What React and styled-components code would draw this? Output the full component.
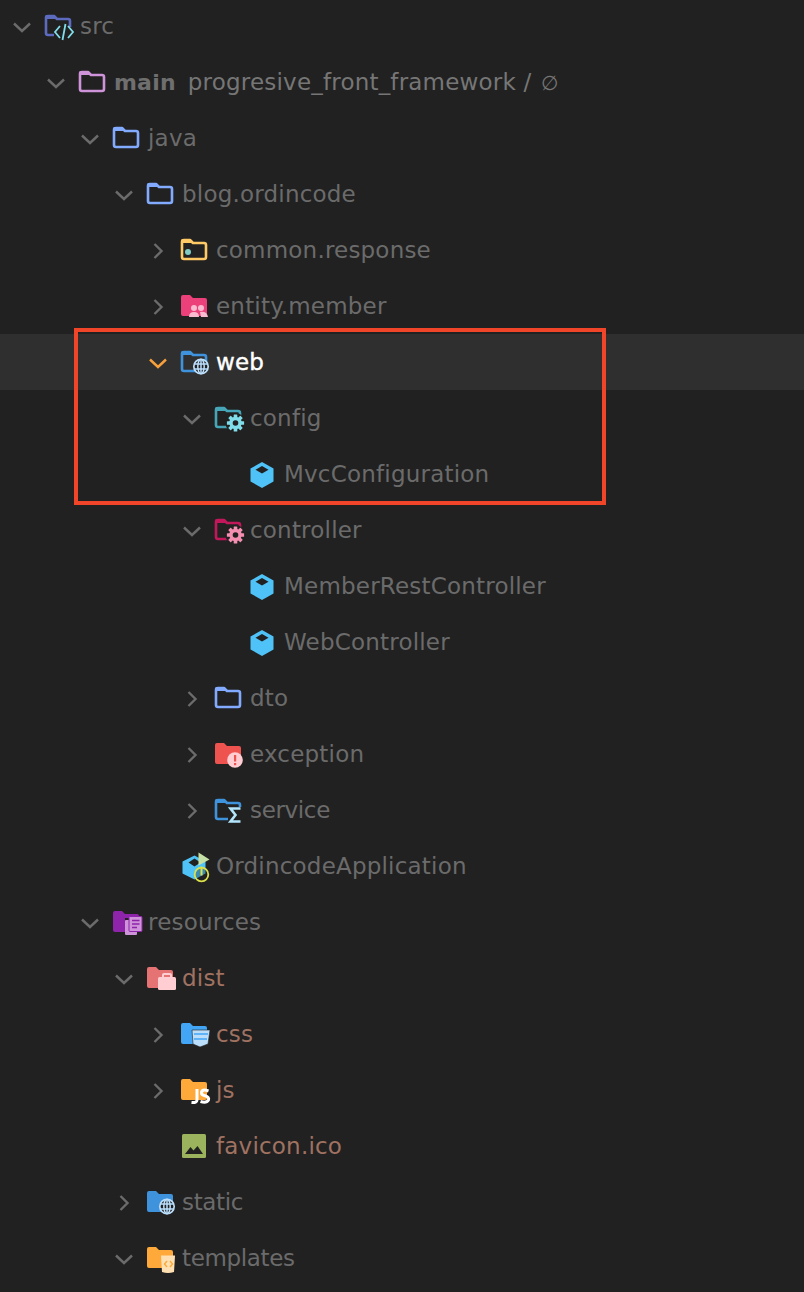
import React from 'react';
import styled, { createGlobalStyle } from 'styled-components';

const GlobalStyle = createGlobalStyle`
  html, body { margin: 0; padding: 0; background: #212121; }
`;

// ─── Icons ───
const FolderOutline = ({ color }) => (
  <path
    fill="none"
    stroke={color}
    strokeWidth="2.6"
    strokeLinejoin="round"
    d="M2 4 Q2 2 4 2 H10 L13 5 H24 Q26 5 26 7 V19 Q26 21 24 21 H4 Q2 21 2 19 Z"
  />
);

const FolderTab = ({ color }) => <path fill={color} d="M1 5 V3 Q1 1 3 1 H10 L14 5 Z" />;

const FolderSolid = ({ color }) => (
  <path fill={color} d="M1 3 Q1 1 3 1 H10 L13 4 H25 Q27 4 27 6 V20 Q27 22 25 22 H3 Q1 22 1 20 Z" />
);

const Gear = ({ color }) => (
  <g transform="translate(21.5 17)">
    {[0, 45, 90, 135].map((a) => (
      <rect key={a} x="-1.8" y="-8.6" width="3.6" height="17.2" rx="0.6" fill={color} transform={`rotate(${a})`} />
    ))}
    <circle r="6.2" fill={color} />
    <circle r="2.8" fill="#212121" />
  </g>
);

const Globe = ({ color }) => (
  <g transform="translate(21 16.5)" fill="none" stroke={color} strokeWidth="1.5">
    <circle r="7.2" fill="#212121" strokeWidth="1.7" />
    <ellipse rx="3.2" ry="7.2" />
    <path d="M-7 -2.4 H7 M-7 2.4 H7 M0 -7 V7" />
  </g>
);

const Cube = () => (
  <>
    <path fill="#4fc3f7" d="M12.5 1 L24 7.5 V20.5 L12.5 27 L1 20.5 V7.5 Z" />
    <path fill="#212121" d="M12.5 5 L19 8.8 L12.5 12.6 L6 8.8 Z" />
  </>
);

const ICONS = {
  src: (
    <>
      <FolderOutline color="#5c6bc0" />
      <FolderTab color="#5c6bc0" />
      <rect x="10" y="13" width="20" height="13" fill="#212121" />
      <path fill="none" stroke="#80deea" strokeWidth="1.8" d="M16 12 L11 18 L16 24 M24 12 L29 18 L24 24 M21.5 10 L18.5 26" />
    </>
  ),
  main: (
    <>
      <FolderOutline color="#ce93d8" />
      <FolderTab color="#ce93d8" />
    </>
  ),
  java: (
    <>
      <FolderOutline color="#82aaff" />
      <FolderTab color="#82aaff" />
    </>
  ),
  common: (
    <>
      <FolderOutline color="#ffc966" />
      <FolderTab color="#ffc966" />
      <circle cx="8" cy="14" r="3" fill="#80cbc4" />
    </>
  ),
  entity: (
    <>
      <FolderSolid color="#ec407a" />
      <circle cx="14" cy="14" r="3" fill="#f8bbd0" />
      <circle cx="21" cy="14" r="3" fill="#f8bbd0" />
      <path fill="#f8bbd0" d="M9 23 Q9 18 14 18 Q19 18 19 23 Z M20 18 Q27 17 28 23 H21 Z" />
    </>
  ),
  web: (
    <>
      <FolderOutline color="#3f93dd" />
      <FolderTab color="#3f93dd" />
      <Globe color="#bbdefb" />
    </>
  ),
  config: (
    <>
      <FolderOutline color="#46a6b8" />
      <FolderTab color="#46a6b8" />
      <circle cx="21.5" cy="17" r="10" fill="#212121" />
      <Gear color="#80deea" />
    </>
  ),
  controller: (
    <>
      <FolderOutline color="#c2185b" />
      <FolderTab color="#c2185b" />
      <circle cx="21.5" cy="17" r="10" fill="#212121" />
      <Gear color="#f48fb1" />
    </>
  ),
  exception: (
    <>
      <FolderSolid color="#ef5350" />
      <circle cx="21" cy="18" r="7.8" fill="#ffcdd2" />
      <rect x="20" y="13" width="2.2" height="6.5" fill="#ef5350" />
      <rect x="20" y="21" width="2.2" height="2.2" fill="#ef5350" />
    </>
  ),
  service: (
    <>
      <FolderOutline color="#3f93dd" />
      <FolderTab color="#3f93dd" />
      <rect x="14" y="9" width="14" height="17" fill="#212121" />
      <path fill="none" stroke="#b3e5fc" strokeWidth="2.6" d="M26.5 10.5 H16.5 L21.5 17 L16.5 23.5 H26.5" />
    </>
  ),
  app: (
    <g transform="translate(1.5 -1.5)">
      <path fill="#4fc3f7" d="M13 3 L24 9 V21 L13 27 L1 21 V9 Z" />
      <path fill="#212121" d="M13 6 L19 10 L13 14 L7 10 Z" />
      <path fill="#c5e1a5" d="M17 0 L28 7 L17 13 Z" />
      <circle cx="20" cy="22" r="6.8" fill="#212121" fillOpacity="0.35" stroke="#dce14a" strokeWidth="1.8" />
      <path stroke="#dce14a" strokeWidth="2" d="M20 14 V23" />
    </g>
  ),
  resources: (
    <>
      <FolderSolid color="#8e24aa" />
      <rect x="13" y="8" width="17" height="17" fill="#212121" />
      <rect x="13" y="10" width="12" height="15" rx="1" fill="#ce93d8" />
      <rect x="17" y="6.5" width="13" height="15" rx="1" fill="#ce93d8" stroke="#8e24aa" strokeWidth="1" />
      <path stroke="#8e24aa" strokeWidth="1.4" d="M20 10.5 H27.5 M20 14 H27.5 M20 17.5 H25" />
    </>
  ),
  dist: (
    <>
      <FolderSolid color="#e57373" />
      <rect x="12" y="11" width="18" height="13" rx="1.5" fill="#ffcdd2" />
      <path fill="none" stroke="#ffcdd2" strokeWidth="2" d="M17 12 V9 Q17 8 18 8 H24 Q25 8 25 9 V12" />
    </>
  ),
  css: (
    <>
      <FolderSolid color="#42a5f5" />
      <path fill="#bbdefb" stroke="#212121" strokeWidth="0.6" d="M12 8 H30 L28 22 L20 25 L13 22 Z" />
      <path stroke="#42a5f5" strokeWidth="1.6" d="M14 12 H28 M14 17 H27" />
    </>
  ),
  js: (
    <>
      <FolderSolid color="#ffa93a" />
      <path stroke="#fff" strokeWidth="3" fill="none" d="M17 11 V22 Q17 25 11.5 24.5" />
      <path stroke="#fff" strokeWidth="3" fill="none" d="M28.5 13 Q21.5 10.5 21.5 15 Q21.5 17 25 17.8 Q29.5 19 28.5 22 Q26.5 25.5 20.5 23.5" />
    </>
  ),
  image: (
    <>
      <rect x="2" y="0" width="24" height="24" rx="1.5" fill="#9ab35c" />
      <path fill="#212121" d="M5 20 L10.5 13 L13.5 16.5 L17.5 12 L23 20 Z" />
    </>
  ),
  static: (
    <>
      <FolderSolid color="#3f93dd" />
      <Globe color="#bbdefb" />
    </>
  ),
  templates: (
    <>
      <FolderSolid color="#ffa93a" />
      <path fill="#ffe0b2" d="M15 9.5 H29 L28 26 Q22 28 16 26 Z" />
      <path fill="none" stroke="#ffa93a" strokeWidth="1.4" d="M21 15 L18.5 18 L21 21 M24 15 L26.5 18 L24 21" />
    </>
  ),
};

// ─── Data ───
const ROWS = [
  { depth: 0, arrow: 'open', icon: 'src', label: 'src', gap: 3 },
  { depth: 1, arrow: 'open', icon: 'main', label: 'main', module: 'progresive_front_framework / ', bold: true, gap: 3 },
  { depth: 2, arrow: 'open', icon: 'java', label: 'java', gap: 3 },
  { depth: 3, arrow: 'open', icon: 'java', label: 'blog.ordincode', gap: 3 },
  { depth: 4, arrow: 'closed', icon: 'common', label: 'common.response', gap: 3 },
  { depth: 4, arrow: 'closed', icon: 'entity', label: 'entity.member', gap: 3 },
  { depth: 4, arrow: 'active', icon: 'web', label: 'web', selected: true, gap: 3 },
  { depth: 5, arrow: 'open', icon: 'config', label: 'config', gap: 3 },
  { depth: 6, icon: 'cube', label: 'MvcConfiguration', gap: 3 },
  { depth: 5, arrow: 'open', icon: 'controller', label: 'controller', gap: 3 },
  { depth: 6, icon: 'cube', label: 'MemberRestController', gap: 3 },
  { depth: 6, icon: 'cube', label: 'WebController', gap: 3 },
  { depth: 5, arrow: 'closed', icon: 'java', label: 'dto', gap: 3 },
  { depth: 5, arrow: 'closed', icon: 'exception', label: 'exception', gap: 3 },
  { depth: 5, arrow: 'closed', icon: 'service', label: 'service', gap: 3, tight: true },
  { depth: 4, icon: 'app', label: 'OrdincodeApplication', gap: 3 },
  { depth: 2, arrow: 'open', icon: 'resources', label: 'resources', gap: 3 },
  { depth: 3, arrow: 'open', icon: 'dist', label: 'dist', tone: 'ignored', gap: 3 },
  { depth: 4, arrow: 'closed', icon: 'css', label: 'css', tone: 'ignored', gap: 3 },
  { depth: 4, arrow: 'closed', icon: 'js', label: 'js', tone: 'ignored', gap: 3 },
  { depth: 4, icon: 'image', label: 'favicon.ico', tone: 'ignored', gap: 3 },
  { depth: 3, arrow: 'closed', icon: 'static', label: 'static', gap: 3, tight: true },
  { depth: 3, arrow: 'open', icon: 'templates', label: 'templates', gap: 3, tight: true },
];

const App = () => (
  <>
    <GlobalStyle />
    <Page>
      <Tree>
        {ROWS.map((row) => (
          <Row key={row.label} $depth={row.depth} $selected={row.selected}>
            <Arrow $kind={row.arrow}>
              {row.arrow && (
                <ArrowSvg width="18" height="16" viewBox="-1 0 18 16" fill="none" stroke="currentColor" strokeWidth="2.4">
                  {row.arrow === 'closed' ? <path d="M4.5 1 L11.5 8 L4.5 15" /> : <path d="M0 4.5 L8 12 L16 4.5" />}
                </ArrowSvg>
              )}
            </Arrow>
            <Icon>
              {row.icon === 'cube' ? (
                <CubeSvg width="26" height="28" viewBox="0 0 25 28"><Cube /></CubeSvg>
              ) : (
                <IconSvg width="32" height="30" viewBox="1 -3 32 30">{ICONS[row.icon]}</IconSvg>
              )}
            </Icon>
            <Label $gap={row.gap} $bold={row.bold} $selected={row.selected} $tone={row.tone} $tight={row.tight}>
              {row.label}
            </Label>
            {row.module && (
              <Module>
                {row.module}
                <NoVcs>∅</NoVcs>
              </Module>
            )}
          </Row>
        ))}
      </Tree>
      <Highlight />
    </Page>
  </>
);

export default App;

// ─── Layout ───
const Page = styled.div`
  position: relative;
  width: 804px;
  height: 1292px;
  overflow: hidden;
  background: #212121;
  font-family: "DejaVu Sans", sans-serif;
`;

const Tree = styled.div`
  display: flex;
  flex-direction: column;
  margin-top: -2px;
`;

const Row = styled.div`
  display: flex;
  align-items: center;
  flex: none;
  height: 56px;
  padding-left: ${({ $depth }) => 14 + $depth * 34}px;
  background: ${({ $selected }) => ($selected ? '#2f2f2f' : 'transparent')};
`;

const Arrow = styled.span`
  display: flex;
  justify-content: center;
  flex: none;
  width: 16px;
  margin-right: 15px;
  color: ${({ $kind }) => ($kind === 'active' ? '#f7a03c' : '#6b6b6b')};
`;

const ArrowSvg = styled.svg`
  flex: none;
  margin-top: 1px;
`;

const Icon = styled.span`
  display: flex;
  flex: none;
  width: 32px;
`;

const IconSvg = styled.svg`
  overflow: visible;
`;

const CubeSvg = styled.svg`
  margin-top: 1px;
`;

const Label = styled.span`
  margin-left: ${({ $gap }) => $gap}px;
  font-size: ${({ $bold }) => ($bold ? 22 : 23)}px;
  letter-spacing: ${({ $tight }) => ($tight ? -0.35 : 0.2)}px;
  font-weight: ${({ $bold }) => ($bold ? 700 : 400)};
  -webkit-text-stroke: ${({ $selected }) => ($selected ? '0.4px #ffffff' : '0')};
  color: ${({ $selected, $tone, $bold }) => {
    if ($selected) return '#ffffff';
    if ($tone === 'ignored') return '#a07261';
    return $bold ? '#6f6f6f' : '#6b6b6b';
  }};
`;

const Module = styled.span`
  margin-left: 12px;
  font-size: 23px;
  letter-spacing: 0.2px;
  color: #767676;
  white-space: pre;
`;

const NoVcs = styled.span`
  margin-left: 2px;
  font-size: 20px;
`;

const Highlight = styled.div`
  position: absolute;
  left: 74px;
  top: 328px;
  width: 524px;
  height: 169px;
  border: 4px solid #f1452a;
`;
